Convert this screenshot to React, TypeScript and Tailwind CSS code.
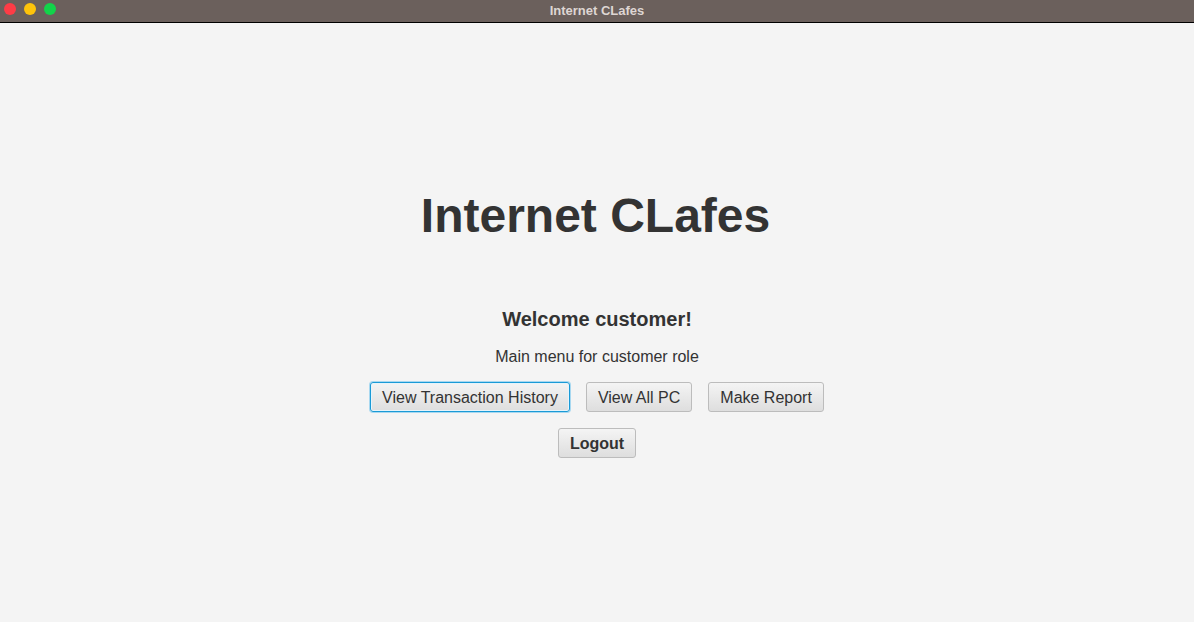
import React from "react";

const Btn = ({ label, focused = false, bold = false }: { label: string; focused?: boolean; bold?: boolean }) => {
  return (
    <button
      type="button"
      className={
        "h-[30px] rounded-[3px] border bg-gradient-to-b from-[#f4f4f4] to-[#dedede] px-[11px] pt-[2px] text-[16px] text-[#333333] " +
        (focused
          ? "border-[#1a9ad6] shadow-[0_0_0_1px_#a8d8f0,inset_0_0_0_1px_#e6f4fb]"
          : "border-[#bcbcbc]") +
        (bold ? " font-bold" : "")
      }
    >
      {label}
    </button>
  );
};

export default function App() {
  return (
    <div className="flex h-[622px] w-[1194px] flex-col bg-[#f4f4f4] font-['Liberation_Sans',Arial,sans-serif]">
      {/* window title bar */}
      <div className="relative flex h-[23px] shrink-0 items-center justify-center border-b border-black bg-[#6b605c]">
        <div className="absolute left-[4px] top-[3px] flex gap-[8px]">
          <span className="h-[12px] w-[12px] rounded-full bg-[#fe3c46]" />
          <span className="h-[12px] w-[12px] rounded-full bg-[#fec30b]" />
          <span className="h-[12px] w-[12px] rounded-full bg-[#12d44a]" />
        </div>
        <span className="text-[13px] font-bold text-[#ded6d3]">Internet CLafes</span>
      </div>

      <div className="flex flex-col items-center pt-[165px] text-[#333333]">
        <h1 className="-ml-[3px] h-[55px] text-[48px] font-bold leading-[55px]">Internet CLafes</h1>
        <p className="mt-[64px] h-[24px] text-[20px] font-bold leading-[24px]">Welcome customer!</p>
        <p className="mt-[16px] h-[20px] text-[16px] leading-[20px]">Main menu for customer role</p>
        <div className="mt-[15px] flex gap-[16px]">
          <Btn label="View Transaction History" focused />
          <Btn label="View All PC" />
          <Btn label="Make Report" />
        </div>
        <div className="mt-[16px]">
          <Btn label="Logout" bold />
        </div>
      </div>
    </div>
  );
}
